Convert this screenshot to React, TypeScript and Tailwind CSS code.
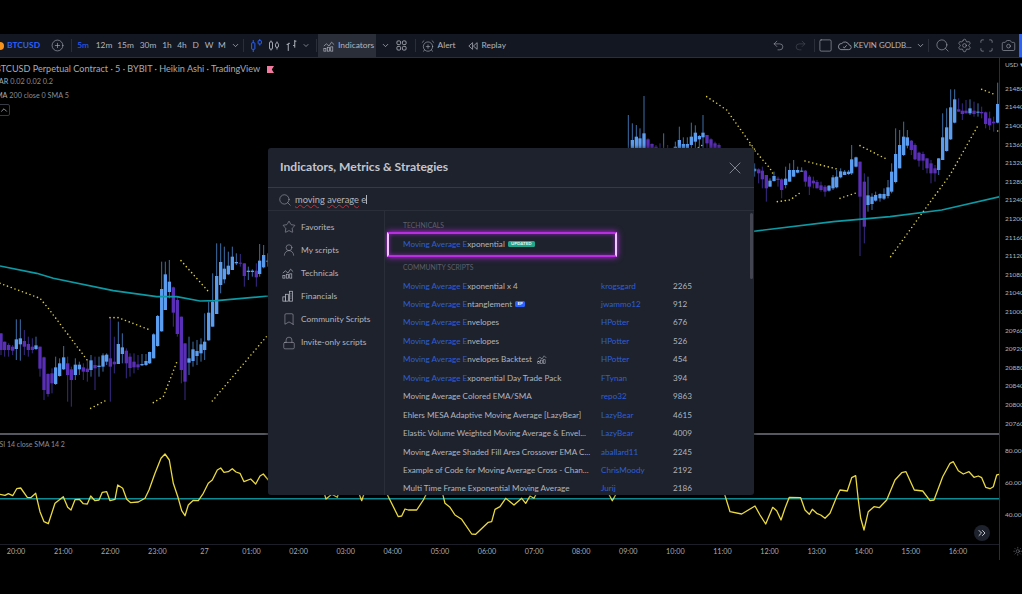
import React from "react";
import { AlarmClockPlus, Bookmark, Camera, ChevronDown, ChevronUp, ChevronsRight, CirclePlus, Lock, Redo2, Scan, Search, Settings, Square, Star, Sun, Undo2, UserRound, X } from "lucide-react";

type C = [number, number, number, number, number, 0 | 1];
type P = [number, number];

// [x, wickTop, wickBottom, bodyTop, bodyBottom, isUp] in 3x crop units
const left: C[] = [[3,310,375,310,360,0],[14,335,380,335,360,0],[26,340,380,345,360,0],[38,345,375,350,362,0],[49,268,390,328,357,1],[61,268,392,325,343,1],[73,300,375,333,350,0],[85,320,380,342,360,0],[97,325,370,350,360,0],[108,320,360,346,357,1],[120,350,440,350,416,0],[132,380,510,382,480,0],[144,430,500,432,492,0],[156,415,490,430,460,0],[167,380,465,412,462,1],[179,385,440,400,438,1],[191,348,420,382,418,1],[203,380,515,400,435,0],[214,410,530,418,450,0],[226,385,450,404,435,1],[238,395,435,404,418,1],[250,400,450,412,425,0],[262,390,455,416,426,0],[273,375,440,391,420,1],[285,380,480,405,415,0],[297,380,440,407,411,1],[309,370,425,376,410,1],[320,370,405,374,395,1],[331,265,515,385,410,0],[343,320,430,395,403,0],[355,275,400,342,402,1],[367,310,400,352,372,1],[379,355,445,362,400,0],[390,370,440,380,414,0],[402,370,430,395,412,0],[414,375,420,403,412,0],[426,372,408,402,406,1],[438,372,408,393,405,1],[449,365,402,366,400,1],[461,310,385,313,385,1],[473,255,350,258,348,1],[485,95,305,177,304,1],[496,95,240,133,240,1],[508,90,205,155,186,1],[520,170,290,172,248,0],[532,200,320,210,312,0],[544,260,460,260,420,0],[555,340,510,340,455,0],[567,320,435,385,398,1],[579,335,410,358,393,1],[591,330,405,363,378,1],[603,325,395,343,370,1],[614,250,390,335,360,1],[626,215,332,248,331,1],[638,130,290,215,290,1],[650,40,252,138,252,1],[662,40,190,96,165,1],[673,50,160,116,148,1],[685,65,135,107,133,1],[697,50,120,80,120,1],[709,70,105,96,100,1],[721,72,110,98,100,0],[733,100,170,100,138,0],[745,110,150,122,126,1],[757,118,140,122,126,1],[769,100,170,122,142,0],[779,42,140,92,132,1],[791,45,115,75,112,1],[803,70,110,92,95,1]];
const right: C[] = [[14,250,290,266,274,1],[26,265,310,268,280,0],[37,260,325,272,298,0],[49,285,365,285,325,0],[60,295,320,302,320,1],[72,275,305,288,303,1],[84,290,320,296,300,0],[95,295,355,298,330,0],[107,260,325,296,315,1],[119,250,305,270,305,1],[131,240,290,270,290,1],[143,260,280,270,278,1],[155,262,275,272,275,1],[166,270,320,272,305,0],[178,285,345,290,320,0],[190,290,325,302,310,0],[201,300,325,306,325,0],[213,305,335,316,330,0],[225,315,350,320,335,0],[237,315,335,317,332,1],[249,285,330,292,325,1],[260,270,325,290,322,1],[272,265,295,274,292,1],[284,270,285,275,285,1],[296,270,285,275,282,1],[305,195,285,238,280,1],[318,230,262,232,260,1],[330,245,528,245,350,0],[343,280,490,305,440,0],[354,290,395,346,375,1],[366,340,390,350,372,1],[377,335,365,345,362,1],[390,340,365,342,355,1],[402,325,360,342,356,1],[414,300,355,322,348,1],[425,250,340,275,335,1],[437,145,310,222,306,1],[449,150,265,195,265,1],[461,125,228,170,225,1],[472,150,205,172,197,1],[484,180,225,182,210,0],[495,190,240,195,238,0],[507,215,260,218,242,0],[519,215,270,222,242,0],[531,235,280,235,265,0],[543,240,310,250,280,0],[555,255,305,265,280,0],[566,235,285,235,270,1],[578,100,240,172,240,1],[590,85,215,142,213,1],[602,28,180,82,178,1],[614,28,130,58,128,1],[626,55,95,88,95,0],[637,70,120,92,102,0],[648,60,100,92,100,0],[660,58,105,85,100,1],[672,65,110,92,102,0],[684,70,110,95,98,1],[695,80,115,96,100,0],[707,95,145,97,132,0],[719,95,150,115,136,0],[731,110,155,125,130,0],[743,8,130,72,128,1]];
const middle: C[] = [[115,105,230,205,230,1],[127,130,230,180,230,1],[139,135,230,170,230,1],[150,145,230,175,230,1],[162,48,230,160,230,1],[174,175,230,178,230,0],[186,190,230,192,230,0],[198,195,230,200,230,0],[210,190,230,205,230,0],[221,160,230,205,230,1],[233,195,230,205,230,0],[256,185,230,200,230,1],[268,140,230,180,230,1],[280,172,230,192,205,1],[292,172,230,192,205,1],[304,128,230,170,195,1],[316,136,230,158,185,1],[328,165,230,168,178,1],[339,105,230,158,172,1],[351,165,230,165,190,0],[363,175,230,178,205,0],[375,185,230,190,230,0],[387,190,230,195,230,0]];

const z7 = (p: P): P => [p[0] / 3, 230 + p[1] / 3];
const z8 = (p: P): P => [750 + p[0] / 3, 80 + p[1] / 3];
const z11 = (p: P): P => [590 + p[0] / 3, 80 + p[1] / 3];

const maLine: P[] = [...([[0,108],[110,130],[160,145],[340,182],[470,200],[530,200],[600,213],[650,212],[805,198]] as P[]).map(z7), ...([[10,454],[250,425],[420,410],[575,390],[750,350]] as P[]).map(z8)];

const sampled = (pts: P[], step = 4): P[] => {
  const out: P[] = [];
  let carry = 0;
  for (let i = 0; i < pts.length - 1; i++) {
    const [a, b] = [pts[i], pts[i + 1]];
    const len = Math.hypot(b[0] - a[0], b[1] - a[1]);
    let d = carry;
    while (d <= len) {
      out.push([a[0] + ((b[0] - a[0]) * d) / len, a[1] + ((b[1] - a[1]) * d) / len]);
      d += step;
    }
    carry = d - len;
  }
  return out;
};

const sarGroups: P[][] = [
  ([[0,160],[120,205],[145,235],[265,395]] as P[]).map(z7),
  ([[272,535],[320,510]] as P[]).map(z7),
  ([[330,263],[355,263],[450,300]] as P[]).map(z7),
  ([[460,518],[490,500],[532,392]] as P[]).map(z7),
  ([[543,92],[630,190]] as P[]).map(z7),
  ([[637,513],[805,313]] as P[]).map(z7),
  ([[350,50],[410,90],[495,210]] as P[]).map(z11),
  ([[325,203],[338,195]] as P[]).map(z11),
  ([[0,195],[60,265],[70,283]] as P[]).map(z8),
  ([[82,365],[120,360],[155,335]] as P[]).map(z8),
  ([[165,243],[260,267]] as P[]).map(z8),
  ([[270,355],[320,338]] as P[]).map(z8),
  ([[330,197],[415,240]] as P[]).map(z8),
  ([[422,530],[518,397],[600,285],[685,135]] as P[]).map(z8),
  ([[695,28],[733,43]] as P[]).map(z8),
  ([[743,153],[743,153.1]] as P[]).map(z8),
];

const z9 = (p: P): P => [p[0] / 3, 430 + p[1] / 3];
const z10 = (p: P): P => [750 + p[0] / 3, 430 + p[1] / 3];
const z12 = (p: P): P => [260 + p[0] / 3, 480 + p[1] / 3];
const rsi: P[] = [
  ...([[0,193],[15,196],[25,191],[38,197],[50,176],[62,174],[82,202],[92,203],[107,190],[120,245],[132,275],[145,281],[165,220],[190,200],[203,232],[213,240],[225,209],[238,208],[250,221],[262,222],[272,198],[285,212],[297,210],[307,187],[320,185],[330,212],[345,208],[353,165],[368,175],[380,208],[392,218],[415,216],[435,205],[447,180],[465,130],[483,85],[495,72],[508,90],[520,160],[535,205],[545,242],[555,257],[565,225],[580,211],[595,212],[610,190],[625,160],[637,150],[652,120],[662,114],[672,127],[685,125],[697,116],[708,126],[720,130],[732,155],[752,147],[767,162],[780,138],[790,132],[805,150]] as P[]).map(z9),
  ...([[190,30],[198,57],[215,43],[232,52],[238,30],[293,30],[305,62],[316,30],[375,30],[415,110],[425,108],[435,87],[445,90],[470,90],[490,60],[505,30],[545,30],[555,70],[570,82],[585,105],[605,118],[635,162],[647,163],[685,127],[695,125],[705,88],[720,80],[737,55],[762,75],[785,55],[797,70],[810,48],[822,55],[835,30],[1040,30],[1057,62],[1075,30],[1390,30],[1410,95],[1445,102]] as P[]).map(z12),
  ...([[15,228],[30,255],[47,282],[68,232],[80,242],[93,270],[105,235],[118,202],[152,203],[165,240],[178,253],[187,238],[200,250],[212,255],[225,265],[240,250],[260,200],[270,180],[292,183],[305,143],[317,137],[325,210],[332,265],[342,300],[355,245],[372,230],[388,233],[410,210],[435,150],[455,128],[468,125],[493,180],[518,183],[540,212],[552,210],[578,140],[600,100],[610,95],[625,122],[640,132],[657,125],[672,142],[685,138],[695,143],[707,172],[720,176],[730,170],[740,135],[748,133]] as P[]).map(z10),
];

const pts = (a: P[]) => a.map((p) => `${p[0].toFixed(1)},${p[1].toFixed(1)}`).join(" ");

function Candles({ data, map }: { data: C[]; map: (p: P) => P }) {
  return (
    <>
      {data.map((c, i) => {
        const [x, wt] = map([c[0], c[1]]);
        const wb = map([c[0], c[2]])[1];
        const bt = map([c[0], c[3]])[1];
        const bb = map([c[0], c[4]])[1];
        return (
          <g key={i}>
            <line x1={x} x2={x} y1={wt} y2={wb} stroke={c[5] ? "#3d6ea8" : "#3a2a85"} strokeWidth={1} />
            <rect x={x - 1.65} y={bt} width={3.3} height={Math.max(bb - bt, 1)} fill={c[5] ? "#5c9df0" : "#5a2fb8"} />
          </g>
        );
      })}
    </>
  );
}

function MainChart() {
  return (
    <svg viewBox="0 58 999 375" className="block w-[999px] h-[375px]">
      <Candles data={left} map={z7} />
      <Candles data={middle} map={z11} />
      <Candles data={right} map={z8} />
      <polyline points={pts(maLine)} fill="none" stroke="#0e9aa4" strokeWidth={1.7} />
      {sarGroups.flatMap((g, i) => sampled(g).map((p, j) => <circle key={`${i}-${j}`} cx={p[0]} cy={p[1]} r={0.8} fill="#dccf42" />))}
    </svg>
  );
}

function RsiChart() {
  return (
    <svg viewBox="0 435 999 109" className="block w-[999px] h-[109px]">
      <line x1={0} x2={999} y1={498.7} y2={498.7} stroke="#0c8c96" strokeWidth={1.5} />
      <polyline points={pts(rsi)} fill="none" stroke="#ead93f" strokeWidth={1.3} strokeLinejoin="round" />
    </svg>
  );
}

const Divider = ({ ml }: { ml: string }) => <div className={`w-px h-[13px] bg-[#2a2e39] shrink-0 ${ml}`} />;

const CandleIcon = () => (
  <svg viewBox="0 0 12 12" className="w-[13px] h-[13px]" fill="none" stroke="#2962ff" strokeWidth={0.9}>
    <rect x="1.5" y="3.5" width="3" height="6" rx="0.5" /><path d="M3 1v2.5M3 9.5V12" />
    <rect x="7.5" y="1.5" width="3" height="3" rx="0.5" /><path d="M9 0v1.5M9 4.5V6" />
  </svg>
);
const BarsIcon = () => (
  <svg viewBox="0 0 12 12" className="w-[13px] h-[13px]" fill="none" stroke="#b2b5be" strokeWidth={0.9}>
    <rect x="1.5" y="2.5" width="3" height="7" rx="0.5" /><path d="M3 1v1.5M3 9.5V11" />
    <path d="M9 3.5a1.5 1.5 0 0 1 1.5 2v1a1.5 1.5 0 0 1-3 0v-1A1.5 1.5 0 0 1 9 3.5z" /><path d="M9 2v1.5M9 8v2" />
  </svg>
);
const LineBarsIcon = () => (
  <svg viewBox="0 0 12 12" className="w-[13px] h-[13px]" fill="none" stroke="#b2b5be" strokeWidth={0.9}>
    <path d="M3 4v7M3 5H1.5M3 4h1.5M9 1v7M9 6H7.5M9 2h1.5" />
  </svg>
);
const TechIcon = ({ size, color }: { size: number; color: string }) => (
  <svg viewBox="0 0 14 14" width={size} height={size} fill="none" stroke={color} strokeWidth={0.8}>
    <path d="M1 7l3-2.5 3 2.5 3-4.5 3 3" />
    <rect x="1" y="10" width="2.4" height="3" /><rect x="5" y="8.5" width="2.4" height="4.5" /><rect x="9" y="8" width="2.4" height="5" />
  </svg>
);
const FinIcon = () => (
  <svg viewBox="0 0 14 14" width={12} height={12} fill="none" stroke="#b2b5be" strokeWidth={0.9}>
    <rect x="1" y="8" width="3.2" height="5" /><rect x="4.2" y="5" width="3.2" height="8" /><rect x="8.6" y="1.5" width="3.6" height="11.5" />
    <path d="M9.8 4.5h1.2M9.8 7h1.2M9.8 9.5h1.2" />
  </svg>
);
const GridIcon = () => (
  <svg viewBox="0 0 12 12" className="w-[11px] h-[11px]" fill="none" stroke="#b2b5be" strokeWidth={0.9}>
    <rect x="1" y="1" width="4" height="4" rx="1.2" /><rect x="7" y="1" width="4" height="4" rx="1.2" />
    <rect x="1" y="7" width="4" height="4" rx="1.2" /><rect x="7" y="7" width="4" height="4" rx="1.2" />
  </svg>
);
const ReplayIcon = () => (
  <svg viewBox="0 0 12 12" className="w-[10px] h-[10px]" fill="none" stroke="#b2b5be" strokeWidth={0.9} strokeLinejoin="round">
    <path d="M5.5 2L1 6l4.5 4zM11 2L6.5 6l4.5 4z" />
  </svg>
);
const CloudIcon = () => (
  <svg viewBox="0 0 16 12" className="w-[15px] h-[11px]" fill="none" stroke="#b2b5be" strokeWidth={0.8} strokeLinejoin="round">
    <path d="M4 10.5h8.5a2.6 2.6 0 0 0 .4-5.2A4.6 4.6 0 0 0 5 3.8a3.4 3.4 0 0 0-1 6.7z" /><path d="M6.5 7.5l1.3 1.2 2.6-3" />
  </svg>
);
const BackArrowFlag = () => (
  <svg viewBox="0 0 8 8" className="w-[7px] h-[7px]"><path d="M0 0h8L5.5 4 8 8H0z" fill="#f27aa0" /></svg>
);

function Toolbar() {
  const intervals: [string, string, string][] = [["5m", "w-[22px]", "text-[#2962ff]"], ["12m", "w-[20px]", "text-[#b2b5be]"], ["15m", "w-[23px]", "text-[#b2b5be]"], ["30m", "w-[22px]", "text-[#b2b5be]"], ["1h", "w-[16px]", "text-[#b2b5be]"], ["4h", "w-[14px]", "text-[#b2b5be]"], ["D", "w-[13.5px]", "text-[#b2b5be]"], ["W", "w-[13px]", "text-[#b2b5be]"], ["M", "w-[13px]", "text-[#b2b5be]"]];
  return (
    <div className="h-[24px] shrink-0 bg-[#131722] border-b border-[#2a2e39] flex items-center text-[8.4px] text-[#b2b5be]">
      <div className="w-[8px] h-[8px] rounded-full bg-[#f7931a] shrink-0 ml-[-4px]" />
      <span className="ml-[3px] w-[31px] font-bold text-[#2962ff] shrink-0">BTCUSD</span>
      <CirclePlus size={13} strokeWidth={1.1} className="ml-[12.5px] shrink-0" />
      <Divider ml="ml-[7.5px]" />
      {intervals.map(([t, w, c]) => <span key={t} className={`${w} ${c} text-center shrink-0`}>{t}</span>)}
      <div className="w-[13px] flex justify-center shrink-0"><ChevronDown size={9} /></div>
      <Divider ml="ml-[1.5px]" />
      <div className="w-[24px] flex justify-center shrink-0"><CandleIcon /></div>
      <div className="w-[12px] flex justify-center shrink-0"><BarsIcon /></div>
      <div className="w-[22px] flex justify-center shrink-0"><LineBarsIcon /></div>
      <div className="w-[8px] flex justify-center shrink-0"><ChevronDown size={9} /></div>
      <Divider ml="ml-[6px]" />
      <div className="ml-[1px] w-[58px] h-full bg-[#2a2e39] flex items-center pl-[5px] gap-[3px] shrink-0">
        <TechIcon size={12} color="#b2b5be" /><span>Indicators</span>
      </div>
      <div className="w-[18px] flex justify-center shrink-0"><ChevronDown size={9} /></div>
      <div className="w-[14px] flex justify-center shrink-0"><GridIcon /></div>
      <Divider ml="ml-[7px]" />
      <AlarmClockPlus size={14} strokeWidth={1} className="ml-[5px] shrink-0" />
      <span className="ml-[2.5px] w-[18px] shrink-0">Alert</span>
      <div className="ml-[12px] shrink-0"><ReplayIcon /></div>
      <span className="ml-[4px] shrink-0">Replay</span>
      <div className="ml-auto flex items-center h-full">
        <div className="w-[22px] flex justify-center"><Undo2 size={13} strokeWidth={1} /></div>
        <div className="w-[22px] flex justify-center text-[#50535e]"><Redo2 size={13} strokeWidth={1} /></div>
        <Divider ml="ml-[2px]" />
        <Square size={15} strokeWidth={0.9} className="ml-[3.5px]" />
        <div className="ml-[4px]"><CloudIcon /></div>
        <span className="ml-[1.5px] w-[55px] whitespace-nowrap text-[7.9px]">KEVIN GOLDB...</span>
        <ChevronDown size={9} className="ml-[7px]" />
        <Divider ml="ml-[3px]" />
        <Search size={15} strokeWidth={0.9} className="ml-[6px]" />
        <Settings size={15} strokeWidth={0.9} className="ml-[7px]" />
        <Scan size={15} strokeWidth={0.9} className="ml-[7px]" />
        <Camera size={15} strokeWidth={0.9} className="ml-[7px]" />
        <div className="ml-[3.5px] w-[3px] h-full bg-[#2962ff]" />
      </div>
    </div>
  );
}

function PriceAxis() {
  const prices = ["21480","21440","21400","21360","21320","21280","21240","21200","21160","21120","21080","21040","21000","20960","20920","20880","20840","20800","20760"];
  return (
    <div className="w-[23px] shrink-0 border-l border-[#2a2e39] overflow-hidden text-[6.5px] text-[#b2b5be] flex flex-col">
      <div className="h-[375px] shrink-0 pl-[5px] whitespace-nowrap">
        <div className="h-[14px] flex items-center">USD ▾</div>
        <div className="mt-[7.7px]">
          {prices.map((p) => <div key={p} className="h-[18.62px] leading-[18.62px]">{p}</div>)}
        </div>
      </div>
      <div className="h-[111px] shrink-0 pl-[5px] pt-[10.5px]">
        <div className="h-[32px] leading-[14px]">80.00</div>
        <div className="h-[32px] leading-[14px]">60.00</div>
        <div className="h-[32px] leading-[14px]">40.00</div>
      </div>
      <div className="h-[15px] shrink-0 pl-[12.5px] flex items-center"><Sun size={10.5} strokeWidth={1} /></div>
    </div>
  );
}

function TimeAxis() {
  const labels = ["20:00","21:00","22:00","23:00","27","01:00","02:00","03:00","04:00","05:00","06:00","07:00","08:00","09:00","10:00","11:00","12:00","13:00","14:00","15:00","16:00"];
  return (
    <div className="h-[16px] shrink-0 border-t border-[#1c1f28] flex items-center text-[7.2px] text-[#a8abb3] ml-[-7.5px]">
      {labels.map((l) => <span key={l} className="w-[47.1px] shrink-0 text-center">{l}</span>)}
    </div>
  );
}

type Row = { blue?: string; text: string; author: string; count: string; extra?: "ep" | "tools" };
const rows: Row[] = [
  { blue: "Moving Average E", text: "xponential x 4", author: "krogsgard", count: "2265" },
  { blue: "Moving Average E", text: "ntanglement", author: "jwammo12", count: "912", extra: "ep" },
  { blue: "Moving Average E", text: "nvelopes", author: "HPotter", count: "676" },
  { blue: "Moving Average E", text: "nvelopes", author: "HPotter", count: "526" },
  { blue: "Moving Average E", text: "nvelopes Backtest", author: "HPotter", count: "454", extra: "tools" },
  { blue: "Moving Average E", text: "xponential Day Trade Pack", author: "FTynan", count: "394" },
  { text: "Moving Average Colored EMA/SMA", author: "repo32", count: "9863" },
  { text: "Ehlers MESA Adaptive Moving Average [LazyBear]", author: "LazyBear", count: "4615" },
  { text: "Elastic Volume Weighted Moving Average & Envel...", author: "LazyBear", count: "4009" },
  { text: "Moving Average Shaded Fill Area Crossover EMA C...", author: "aballard11", count: "2245" },
  { text: "Example of Code for Moving Average Cross - Chan...", author: "ChrisMoody", count: "2192" },
  { text: "Multi Time Frame Exponential Moving Average", author: "Jurij", count: "2186" },
];

function Modal() {
  const side: [React.ReactNode, string][] = [
    [<Star size={14} strokeWidth={0.9} />, "Favorites"],
    [<UserRound size={14} strokeWidth={0.9} />, "My scripts"],
    [<TechIcon size={12} color="#b2b5be" />, "Technicals"],
    [<FinIcon />, "Financials"],
    [<Bookmark size={14} strokeWidth={0.9} />, "Community Scripts"],
    [<Lock size={14} strokeWidth={0.9} />, "Invite-only scripts"],
  ];
  return (
    <div className="absolute left-[268px] top-[148px] w-[486px] h-[347px] bg-[#1e222d] rounded-[3px] flex flex-col overflow-hidden text-[#b2b5be] shadow-[0_0_4px_rgba(0,0,0,0.6)]">
      <div className="h-[40px] shrink-0 border-b border-[#363a45] flex items-center justify-between pl-[12px] pr-[9px]">
        <span className="text-[12.1px] font-bold text-[#c3c6ce]">Indicators, Metrics &amp; Strategies</span>
        <X size={20} strokeWidth={0.8} className="text-[#b2b5be]" />
      </div>
      <div className="h-[23px] shrink-0 border-b border-[#2a2e39] flex items-center pl-[10px] pt-[1px]">
        <Search size={14} strokeWidth={0.9} />
        <span className="ml-[3px] text-[9.3px]"><span className="underline decoration-wavy decoration-[#d22a32] decoration-[1px] underline-offset-[1px]">moving</span> <span className="underline decoration-wavy decoration-[#d22a32] decoration-[1px] underline-offset-[1px]">average</span> e</span>
        <span className="w-px h-[9px] bg-[#b2b5be]" />
      </div>
      <div className="flex-1 flex min-h-0">
        <div className="w-[117px] shrink-0 border-r border-[#2a2e39] pt-[4.5px] pl-[14px]">
          {side.map(([icon, label]) => (
            <div key={label} className="h-[23.1px] flex items-center text-[8.4px]">
              <div className="w-[19px] shrink-0 flex items-center">{icon}</div>
              <span className="whitespace-nowrap">{label}</span>
            </div>
          ))}
        </div>
        <div className="flex-1 relative overflow-hidden text-[8.15px] whitespace-nowrap">
          <div className="pl-[18px] h-[20.5px] pt-[8px] text-[6.8px] text-[#5d606b] flex items-center">TECHNICALS</div>
          <div className="ml-[2px] w-[230px] h-[25px] border-2 border-[#b92ee0] border-x-[#f0c6ff] shadow-[0_0_6px_#c02cf0,inset_0_0_4px_#8a20b0] flex items-center pl-[14px]">
            <span className="text-[#2e5fd6]">Moving Average E</span><span>xponential</span>
            <span className="ml-[3px] h-[6px] w-[27px] rounded-[1.5px] bg-[#22a58a] text-[4.4px] font-bold text-[#e6f7f3] flex items-center justify-center">UPDATED</span>
          </div>
          <div className="pl-[18px] h-[20px] mt-[1px] text-[6.8px] text-[#5d606b] flex items-center">COMMUNITY SCRIPTS</div>
          <div className="pl-[18px] mt-[-1px]">
            {rows.map((r, i) => (
              <div key={i} className="h-[18.45px] flex items-center">
                <div className="w-[198px] shrink-0 flex items-center">
                  {r.blue && <span className="text-[#2e5fd6]">{r.blue}</span>}
                  <span>{r.text}</span>
                  {r.extra === "ep" && <span className="ml-[3px] h-[6px] w-[10px] rounded-[1.5px] bg-[#2962ff] text-[4.4px] font-bold text-white flex items-center justify-center">EP</span>}
                  {r.extra === "tools" && <span className="ml-[5px] flex"><TechIcon size={10} color="#b2b5be" /></span>}
                </div>
                <div className="w-[72px] shrink-0 text-[#2e5fd6]">{r.author}</div>
                <div>{r.count}</div>
              </div>
            ))}
          </div>
          <div className="absolute right-[1px] top-[2px] w-[3px] h-[66px] bg-[#434651] rounded-full" />
        </div>
      </div>
    </div>
  );
}

export default function App() {
  return (
    <div className="relative w-[1022px] h-[594px] bg-black overflow-hidden flex flex-col" style={{ fontFamily: 'Lato, "Noto Sans", sans-serif' }}>
      <div className="h-[34px] shrink-0" />
      <Toolbar />
      <div className="h-[502px] shrink-0 flex">
        <div className="w-[999px] shrink-0 flex flex-col">
          <div className="relative h-[375px] shrink-0">
            <MainChart />
            <div className="absolute left-[-5px] top-[4px] text-[#a8abb3] whitespace-nowrap">
              <div className="flex items-center h-[14px] text-[9.1px]">
                <span>BTCUSD Perpetual Contract · 5 · BYBIT · Heikin Ashi · TradingView</span>
                <span className="ml-[7px] flex"><BackArrowFlag /></span>
              </div>
              <div className="h-[13.5px] flex items-center text-[7.3px] text-[#8a8d96]"><span className="text-[#a8abb3]">SAR</span>&nbsp;0.02 0.02 0.2</div>
              <div className="h-[13px] flex items-center text-[7.2px] text-[#8a8d96]"><span className="text-[#a8abb3] ml-[-3px]">SMA</span>&nbsp;200 close 0 SMA 5</div>
              <div className="mt-[1px] ml-[3px] w-[12px] h-[12px] border border-[#363a45] rounded-[2px] flex items-center justify-center"><ChevronUp size={10} /></div>
            </div>
          </div>
          <div className="h-[2px] shrink-0 bg-[#555861]" />
          <div className="relative h-[109px] shrink-0">
            <RsiChart />
            <div className="absolute left-[-5px] top-[4px] text-[7px] text-[#8a8d96] whitespace-nowrap">RSI 14 close SMA 14 2</div>
            <div className="absolute left-[974px] top-[90px] w-[16px] h-[16px] rounded-full bg-[#1e222d] flex items-center justify-center text-[#c3c6ce]"><ChevronsRight size={12} /></div>
          </div>
          <TimeAxis />
        </div>
        <PriceAxis />
      </div>
      <Modal />
    </div>
  );
}
